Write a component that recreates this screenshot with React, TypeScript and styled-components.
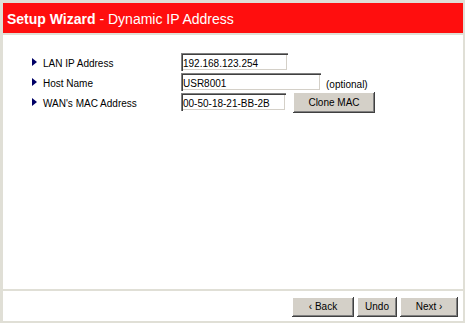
import React from "react";
import styled, { createGlobalStyle } from "styled-components";

const Global = createGlobalStyle`
  html, body { margin: 0; padding: 0; background: #ffffff; }
  body { font-family: "Liberation Sans", Arial, sans-serif; }
`;

const Frame = styled.div`
  box-sizing: border-box;
  width: 465px;
  height: 323px;
  background: #e0dfd6;
  padding: 3px 2px 2px 3px;
  display: grid;
  grid-template-rows: 30px 1fr 30px;
  row-gap: 2px;
`;

const Header = styled.div`
  background: #ff0e0e;
  color: #ffffff;
  font-size: 14px;
  display: flex;
  align-items: center;
  padding-left: 4px;
  padding-top: 1px;
  white-space: pre;
`;

const Bold = styled.span`
  font-weight: bold;
`;

const Content = styled.div`
  background: #ffffff;
  padding: 18px 0 0 29px;
  display: grid;
  grid-template-columns: 149px auto;
  grid-auto-rows: 18px;
  row-gap: 2px;
  align-content: start;
`;

const Label = styled.div`
  display: flex;
  align-items: center;
  gap: 6px;
  font-size: 10px;
  color: #000000;
  padding-top: 2px;
`;

const Arrow = styled.span`
  width: 0;
  height: 0;
  border-left: 5px solid #000066;
  border-top: 4px solid transparent;
  border-bottom: 4px solid transparent;
  margin-top: -3px;
`;

const Field = styled.div`
  display: flex;
  align-items: center;
  gap: 5px;
`;

const Input = styled.input<{ $w: number }>`
  box-sizing: border-box;
  width: ${(p) => p.$w}px;
  height: 18px;
  border: none;
  margin: 0;
  padding: 2px 2px 0;
  font-family: "Liberation Sans", Arial, sans-serif;
  font-size: 10px;
  color: #000;
  background: #fff;
  box-shadow: inset 1px 1px #808080, inset 2px 2px #404040,
    inset -1px -1px #ffffff, inset -2px -2px #d4d0c8;
  outline: none;
`;

const Note = styled.span`
  font-size: 10px;
  padding-top: 5px;
`;

const Button = styled.button<{ $w: number }>`
  box-sizing: border-box;
  width: ${(p) => p.$w}px;
  height: 20px;
  margin: 0;
  padding: 0;
  border: none;
  background: #d4d0c8;
  font-family: "Liberation Sans", Arial, sans-serif;
  font-size: 10px;
  color: #000;
  box-shadow: inset -1px -1px #404040, inset 1px 1px #ffffff,
    inset -2px -2px #808080, inset 2px 2px #d4d0c8;
`;

const CloneButton = styled(Button)`
  margin-left: 2px;
  height: 21px;
`;

const Footer = styled.div`
  background: #ffffff;
  display: flex;
  justify-content: flex-end;
  align-items: center;
  gap: 3px;
  padding: 1px 5px 0 0;
`;

export default function App() {
  return (
    <>
      <Global />
      <Frame>
        <Header>
          <Bold>Setup Wizard</Bold> - Dynamic IP Address
        </Header>
        <Content>
          <Label>
            <Arrow />
            LAN IP Address
          </Label>
          <Field>
            <Input $w={107} defaultValue="192.168.123.254" />
          </Field>
          <Label>
            <Arrow />
            Host Name
          </Label>
          <Field>
            <Input $w={140} defaultValue="USR8001" />
            <Note>(optional)</Note>
          </Field>
          <Label>
            <Arrow />
            WAN's MAC Address
          </Label>
          <Field>
            <Input $w={105} defaultValue="00-50-18-21-BB-2B" />
            <CloneButton $w={82}>Clone MAC</CloneButton>
          </Field>
        </Content>
        <Footer>
          <Button $w={62}>&lsaquo; Back</Button>
          <Button $w={40}>Undo</Button>
          <Button $w={58}>Next &rsaquo;</Button>
        </Footer>
      </Frame>
    </>
  );
}
